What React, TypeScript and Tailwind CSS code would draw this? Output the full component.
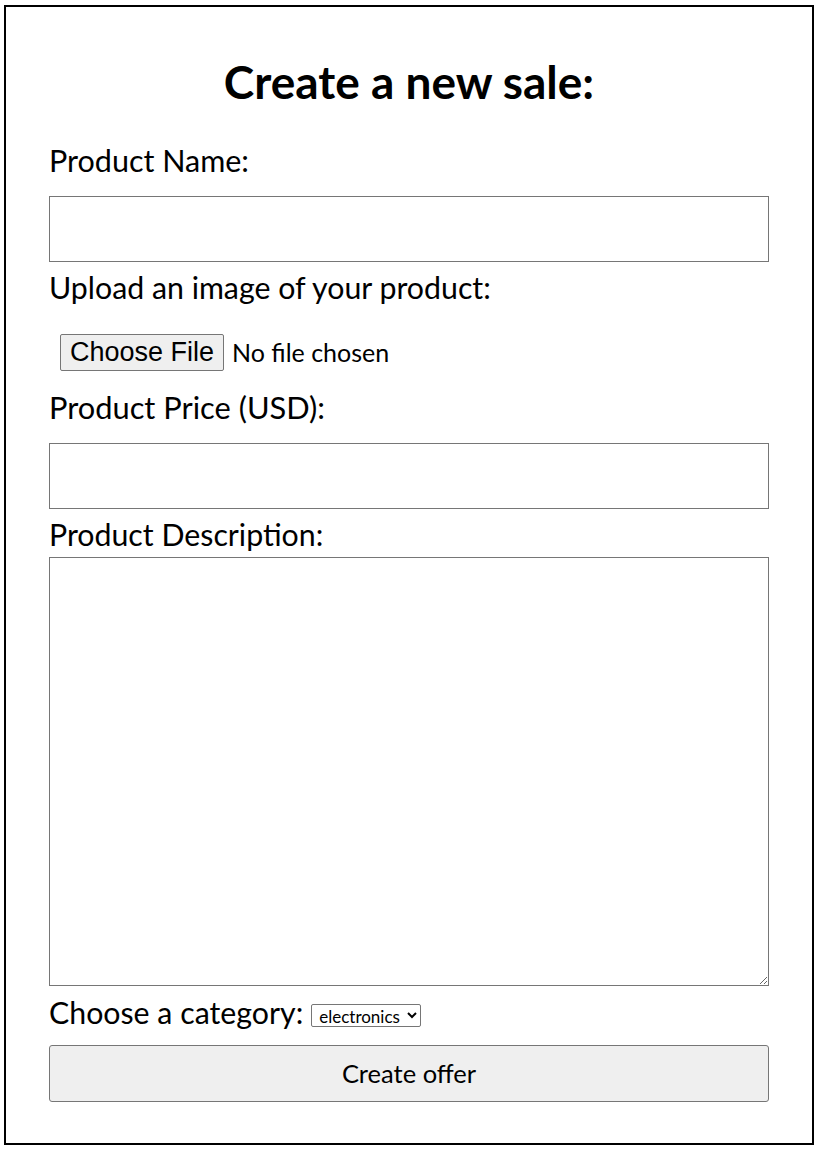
import React from "react";

const gill = { fontFamily: "Lato, 'Noto Sans', sans-serif" };

export default function App() {
  return (
    <div className="bg-white w-[817px] h-[1150px] pt-[5px] pl-[4px]">
      <div
        className="w-[810px] h-[1140px] border-2 border-black px-[43px] flex flex-col text-black"
        style={gill}
      >
        <h1 className="mt-[45px] h-[60px] leading-[60px] text-center text-[46px] font-bold">
          Create a new sale:
        </h1>
        <label className="mt-[28px] h-[40px] leading-[40px] text-[30.5px]">Product Name:</label>
        <input
          type="text"
          className="mt-[16px] h-[66px] w-full border border-[#767676] bg-white outline-none"
        />
        <label className="mt-[5px] h-[40px] leading-[40px] text-[30.3px]">
          Upload an image of your product:
        </label>
        <div className="mt-[27px] ml-[11px] h-[37px] flex items-center gap-[8px]">
          <button
            type="button"
            className="h-[37px] px-[9px] bg-[#efefef] border border-[#767676] rounded-[2px] text-[27px] leading-none"
            style={{ fontFamily: "'Liberation Sans', Arial, sans-serif" }}
          >
            Choose File
          </button>
          <span className="text-[25px]">No file chosen</span>
        </div>
        <label className="mt-[17px] h-[40px] leading-[40px] text-[30.8px]">Product Price (USD):</label>
        <input
          type="text"
          className="mt-[15px] h-[66px] w-full border border-[#767676] bg-white outline-none"
        />
        <label className="mt-[5px] h-[40px] leading-[40px] text-[30.3px]">Product Description:</label>
        <textarea className="mt-[3px] h-[429px] w-full border border-[#767676] bg-white outline-none" />
        <div className="mt-[6px] h-[40px] flex items-center gap-[8px]">
          <span className="text-[30.3px] leading-[40px]">Choose a category:</span>
          <select
            className="mt-[6px] h-[23px] w-[110px] pl-[3px] border border-[#767676] rounded-[2px] text-[17px] bg-white"
            style={gill}
            defaultValue="electronics"
          >
            <option value="electronics">electronics</option>
          </select>
        </div>
        <button
          type="button"
          className="mt-[13px] h-[57px] w-full bg-[#efefef] border border-[#767676] rounded-[3px] text-[25.5px]"
          style={gill}
        >
          Create offer
        </button>
      </div>
    </div>
  );
}
